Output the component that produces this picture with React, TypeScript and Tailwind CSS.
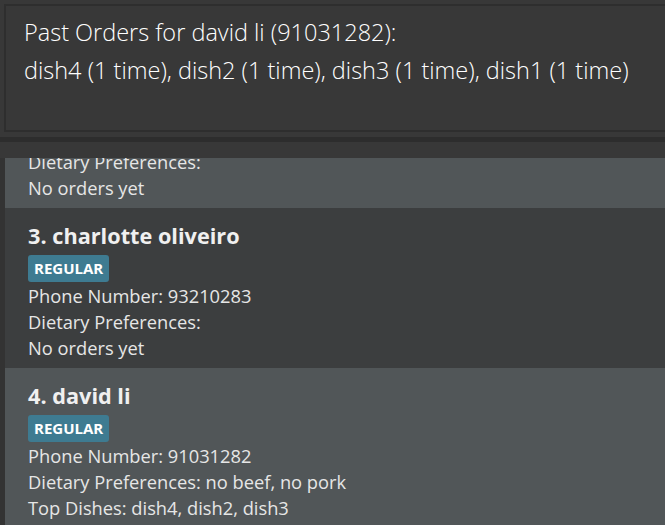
import React from 'react';

type Person = {
  index: number;
  name: string;
  tag: string;
  phone: string;
  dietary: string;
  extra: string;
};

const people: Person[] = [
  { index: 3, name: 'charlotte oliveiro', tag: 'REGULAR', phone: '93210283', dietary: '', extra: 'No orders yet' },
  { index: 4, name: 'david li', tag: 'REGULAR', phone: '91031282', dietary: 'no beef, no pork', extra: 'Top Dishes: dish4, dish2, dish3' },
];

function PersonCard({ p }: { p: Person }) {
  const light = p.index % 2 === 0;
  return (
    <div className={`pl-[23px] pt-[15px] pb-[7px] ${light ? 'bg-[#515658]' : 'bg-[#3c3e3f]'}`}>
      <div className="h-[26px] leading-[26px] text-[21.7px] font-bold text-[#f0f0f0]">
        {p.index}. {p.name}
      </div>
      <div className="mt-[6px] flex">
        <span className="h-[27px] leading-[27px] px-[6px] rounded-[3px] bg-[#3e7b91] text-[15px] font-bold text-white">
          {p.tag}
        </span>
      </div>
      <div className="mt-[1px] text-[18.3px] leading-[26px] text-[#e6e6e6]">
        <div>Phone Number: {p.phone}</div>
        <div>Dietary Preferences:{p.dietary ? ' ' + p.dietary : ''}</div>
        <div>{p.extra}</div>
      </div>
    </div>
  );
}

export default function App() {
  return (
    <div
      className="w-[665px] h-[525px] overflow-hidden bg-[#383838] flex flex-col"
      style={{ fontFamily: '"Segoe UI", "Open Sans", "Noto Sans", sans-serif' }}
    >
      <div className="pt-[4px] pl-[4px] shrink-0">
        <div className="h-[128px] border-l-2 border-t-2 border-b-2 border-[#2e2e2e] bg-[#383838] pl-[18px] pt-[7px] text-[23.5px] font-light text-white">
          <div className="leading-[38px] whitespace-nowrap">Past Orders for david li (91031282):</div>
          <div className="leading-[38px] whitespace-nowrap">dish4 (1 time), dish2 (1 time), dish3 (1 time), dish1 (1 time)</div>
        </div>
      </div>
      <div className="h-[5px] mt-[5px] bg-[#2d2d2d] shrink-0" />
      <div className="flex-1 pt-[16px] bg-[#383838] flex">
        <div className="w-[5px] bg-[#333333]" />
        <div className="flex-1 overflow-hidden">
          {/* previous card, scrolled mostly out of view */}
          <div className="h-[50px] overflow-hidden bg-[#515658] pl-[23px]">
            <div className="-mt-[9px] text-[18.3px] leading-[26px] text-[#e6e6e6]">
              <div>Dietary Preferences:</div>
              <div>No orders yet</div>
            </div>
          </div>
          {people.map((p) => (
            <PersonCard key={p.index} p={p} />
          ))}
        </div>
      </div>
    </div>
  );
}
